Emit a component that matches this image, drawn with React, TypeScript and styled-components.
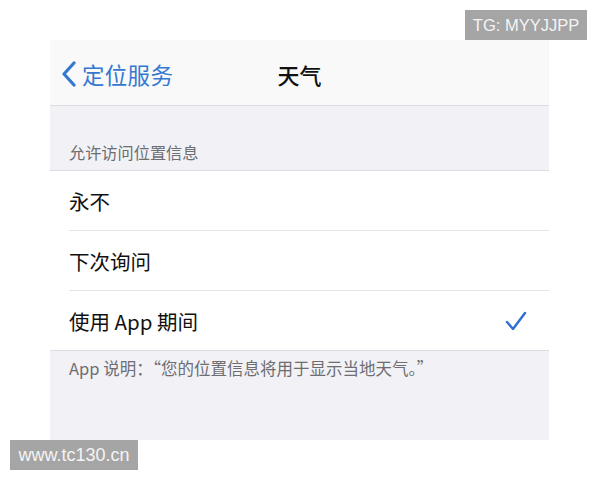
import styled, { createGlobalStyle } from "styled-components";

const GlobalStyle = createGlobalStyle`
    html, body {
        margin: 0;
        padding: 0;
        background: #ffffff;
        font-family: "Noto Sans CJK SC", "Noto Sans", sans-serif;
    }
`

const Page = styled.div`
    position: relative;
    width: 600px;
    height: 480px;
    padding: 40px 0 0 50px;
    box-sizing: border-box;
    overflow: hidden;
`

const Screen = styled.div`
    width: 499px;
    height: 400px;
    background: #f2f2f6;
    display: flex;
    flex-direction: column;
`

const NavBar = styled.div`
    height: 66px;
    flex-shrink: 0;
    background: #f9f9fa;
    border-bottom: 1px solid #dcdce0;
    display: grid;
    grid-template-columns: 1fr auto 1fr;
    align-items: center;
    padding-top: 2px;
    box-sizing: border-box;
`

const BackButton = styled.div`
    display: flex;
    align-items: center;
    gap: 5px;
    padding-left: 11px;
    color: #3478d0;
    font-size: 22.5px;
    letter-spacing: 0.3px;
`

const NavTitle = styled.div`
    color: #111111;
    font-size: 22px;
    font-weight: 500;
`

const SectionHeader = styled.div`
    height: 64px;
    display: flex;
    align-items: flex-end;
    padding: 0 0 6px 19px;
    box-sizing: border-box;
    color: #6d6d72;
    font-size: 16.2px;
`

const Group = styled.div`
    background: #ffffff;
    border-top: 1px solid #dcdce0;
    border-bottom: 1px solid #dcdce0;
`

const Row = styled.div<{ $last?: boolean }>`
    height: 59px;
    margin-left: 19px;
    padding-right: 22px;
    display: flex;
    align-items: center;
    justify-content: space-between;
    border-bottom: ${ p => p.$last ? 'none' : '1px solid #e4e4e7' };
    color: #111111;
    font-size: 20.5px;
`

const Footer = styled.div`
    padding: 5px 0 0 19px;
    color: #6d6d72;
    font-size: 16.5px;
`

const Watermark = styled.div<{ $top: number, $left: number, $width: number, $size: number }>`
    position: absolute;
    top: ${ p => p.$top }px;
    left: ${ p => p.$left }px;
    width: ${ p => p.$width }px;
    height: 30px;
    display: flex;
    align-items: center;
    justify-content: center;
    background: #a5a5a5;
    color: #f4f4f4;
    font-family: "Liberation Sans", Arial, sans-serif;
    font-size: ${ p => p.$size }px;
`

const Chevron = () => <svg width="16" height="26" viewBox="0 0 16 26">
    <path d="M13 2 L3 13 L13 24" fill="none" stroke="#3478d0" strokeWidth="3.2" strokeLinecap="round" strokeLinejoin="round" />
</svg>

const Check = () => <svg width="22" height="20" viewBox="0 0 22 20">
    <path d="M2 11 L8 18 L20 2" fill="none" stroke="#2f6fcf" strokeWidth="2.4" strokeLinecap="round" strokeLinejoin="round" />
</svg>

const options = ['永不', '下次询问', '使用 App 期间']

const App = () => {
    return <Page>
        <GlobalStyle />
        <Screen>
            <NavBar>
                <BackButton><Chevron />定位服务</BackButton>
                <NavTitle>天气</NavTitle>
                <div />
            </NavBar>
            <SectionHeader>允许访问位置信息</SectionHeader>
            <Group>
                { options.map((o, i) => <Row key={ o } $last={ i === options.length - 1 }>
                    <span>{ o }</span>
                    { i === 2 ? <Check /> : null }
                </Row>) }
            </Group>
            <Footer>App 说明：“您的位置信息将用于显示当地天气。”</Footer>
        </Screen>
        <Watermark $top={ 10 } $left={ 465 } $width={ 122 } $size={ 16.5 }>TG: MYYJJPP</Watermark>
        <Watermark $top={ 440 } $left={ 10 } $width={ 128 } $size={ 18 }>www.tc130.cn</Watermark>
    </Page>
}

export default App
